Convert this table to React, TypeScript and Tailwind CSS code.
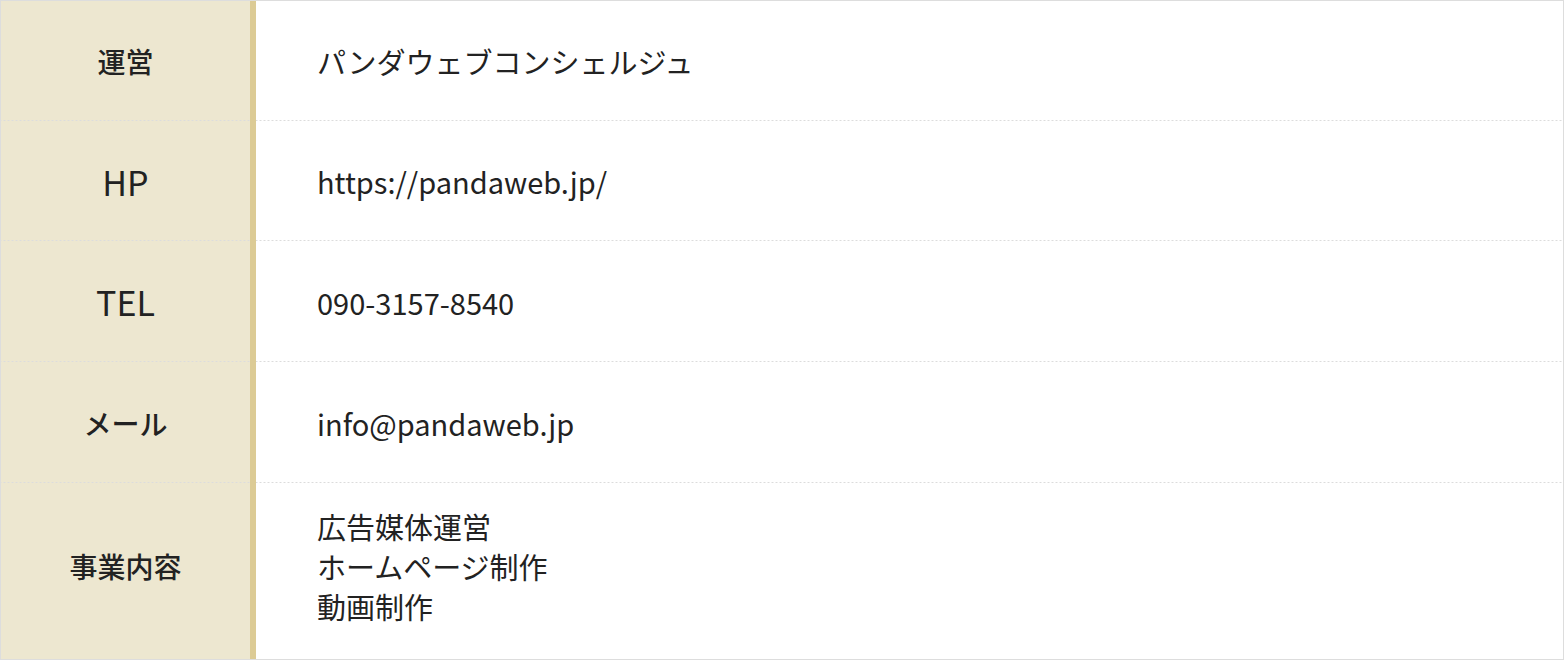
const rows: { label: string; latin?: boolean; h: string; lines: string[] }[] = [
  { label: '運営', h: 'h-[120px]', lines: ['パンダウェブコンシェルジュ'] },
  { label: 'HP', latin: true, h: 'h-[120px]', lines: ['https://pandaweb.jp/'] },
  { label: 'TEL', latin: true, h: 'h-[121px]', lines: ['090-3157-8540'] },
  { label: 'メール', h: 'h-[121px]', lines: ['info@pandaweb.jp'] },
  { label: '事業内容', h: 'flex-1', lines: ['広告媒体運営', 'ホームページ制作', '動画制作'] },
]

const dotted =
  'bg-[linear-gradient(to_right,#dcdcdc_50%,transparent_50%)] bg-[length:4px_1px] bg-bottom bg-repeat-x'

export default function App() {
  return (
    <div
      className="flex h-[660px] w-[1564px] flex-col border border-[#dddddd] bg-white text-[#222222]"
      style={{ fontFamily: '"Noto Sans CJK JP", "Noto Sans", sans-serif' }}
    >
      {rows.map((row, i) => {
        const last = i === rows.length - 1
        return (
          <div key={row.label} className={`flex ${row.h}`}>
            <div
              className={`flex w-[255px] shrink-0 items-center justify-center border-r-[6px] border-[#dccb95] bg-[#ede7d0] ${
                row.latin ? 'text-[34px] font-normal' : 'text-[28px] font-medium'
              } ${last ? 'pb-[10px]' : dotted}`}
            >
              {row.label}
            </div>
            <div
              className={`flex flex-1 flex-col justify-center pl-[61px] text-[29px] leading-[40px] ${last ? 'pb-[10px]' : dotted}`}
            >
              {row.lines.map((line) => (
                <div key={line}>{line}</div>
              ))}
            </div>
          </div>
        )
      })}
    </div>
  )
}
